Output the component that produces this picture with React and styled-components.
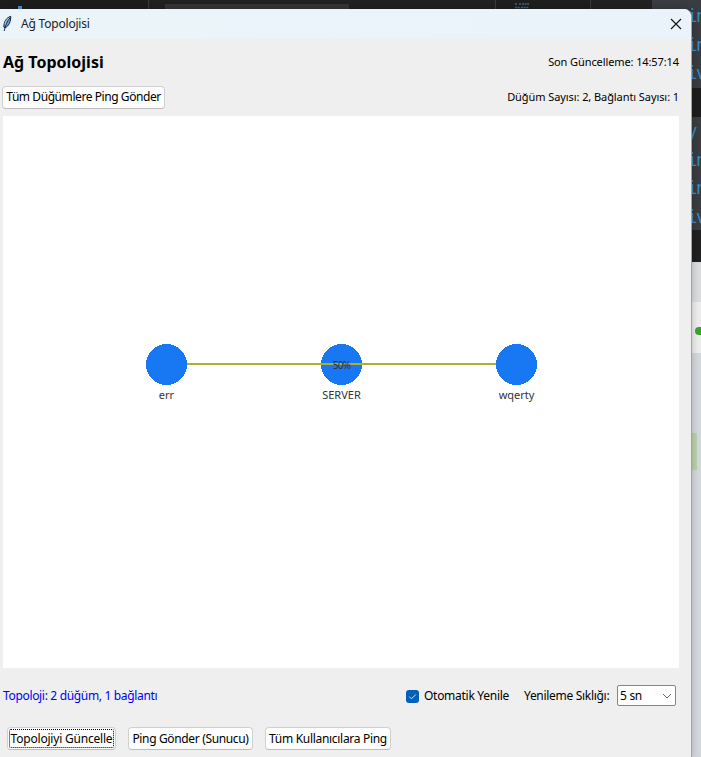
import React from "react";
import styled, { createGlobalStyle } from "styled-components";

const GlobalStyle = createGlobalStyle`
  * { box-sizing: border-box; }
  body { margin: 0; overflow: hidden; }
  button { margin: 0; font: inherit; letter-spacing: inherit; }
`;

const Desktop = styled.div`
  display: grid;
  width: 701px;
  height: 757px;
  overflow: hidden;
  font: 12px/16px "Noto Sans", "Open Sans", sans-serif;
  color: #000;
`;

const Backdrop = styled.div`
  grid-area: 1 / 1;
  display: flex;
  justify-content: space-between;
  background: #1d1d1d;
  overflow: hidden;
`;

const EditorStrip = styled.div`
  display: flex;
  width: 652px;
  height: 24px;
`;

const StripPart = styled.div`
  width: ${(p) => p.$w}px;
  background: ${(p) => p.$bg};
  border-left: ${(p) => (p.$line ? "1px solid #3c3c3c" : "0")};
`;

const SearchBox = styled.div`
  width: 184px;
  height: 12px;
  margin: 4px 0 0 16px;
  background: #353535;
`;

const CodeGlyph = styled.div`
  width: 4px;
  height: 3px;
  margin: 6px 0 0 18px;
  background: #4a8fd0;
`;

const MiniMap = styled.svg`
  display: block;
  margin: 2px 0 0 18px;
`;

const SideColumn = styled.div`
  width: 49px;
  display: flex;
  flex-direction: column;
`;

const Band = styled.div`
  flex: none;
  height: ${(p) => p.$h}px;
  padding: ${(p) => p.$pt || 0}px 0 0 ${(p) => p.$pl || 0}px;
  background: ${(p) => p.$bg};
  overflow: hidden;
`;

const CodeLine = styled.div`
  height: 28.6px;
  font: 17px/28px "DejaVu Sans Mono", monospace;
  letter-spacing: -1.2px;
  color: #4389c8;
  white-space: pre;
`;

const StatusDot = styled.div`
  width: 9px;
  height: 8px;
  border-radius: 4px;
  background: #35a528;
`;

const Highlight = styled.div`
  width: 45px;
  height: 37px;
  background: #b9d2a8;
`;

const Window = styled.div`
  grid-area: 1 / 1;
  z-index: 1;
  width: 692px;
  height: 748px;
  margin-top: 9px;
  border-right: 1px solid #a2a4a7;
  border-radius: 0 8px 0 0;
  background: #efefef;
  overflow: hidden;
  box-shadow: 0 0 7px rgba(0, 0, 0, 0.22);
`;

const TitleBar = styled.div`
  display: flex;
  align-items: center;
  height: 30px;
  padding: 0 9px 0 1px;
  background: linear-gradient(90deg, #ebf4f8, #eaf3fb);
`;

const Text = styled.span`
  white-space: nowrap;
  font-size: ${(p) => p.$size || 12}px;
  letter-spacing: ${(p) => p.$ls || 0}px;
  color: ${(p) => p.$color || "#000"};
`;

const Heading = styled.h1`
  margin: 0;
  font-size: 16px;
  line-height: 22px;
  font-weight: 700;
  white-space: nowrap;
`;

const TitleText = styled(Text)`
  flex: 1;
  margin-left: 8px;
`;

const Row = styled.div`
  display: flex;
  align-items: center;
  justify-content: space-between;
  height: ${(p) => p.$h}px;
  padding: 0 12px 0 ${(p) => p.$pl}px;
`;

const Canvas = styled.div`
  width: 676px;
  height: 552px;
  margin: 7px 0 0 3px;
  background: #fff;
`;

const Button = styled.button`
  display: flex;
  align-items: center;
  justify-content: center;
  width: ${(p) => p.$w}px;
  height: 23px;
  padding: 0;
  border: 1px solid #d0d0d0;
  border-bottom-color: #bcbcbc;
  border-radius: 4px;
  background: #fdfdfd;
  outline: ${(p) => (p.$focused ? "1px dotted #000" : "none")};
  outline-offset: -3px;
`;

const ButtonRow = styled.div`
  display: flex;
  gap: 12px;
  padding: 19px 0 0 7px;
`;

const StatusRow = styled.div`
  display: flex;
  align-items: center;
  height: 24px;
  margin-top: 16px;
  padding: 0 15px 0 3px;
`;

const Check = styled.span`
  display: flex;
  width: 13px;
  height: 13px;
  margin: 0 5px 0 auto;
  border-radius: 3px;
  background: #005fb8;
`;

const Frequency = styled(Text)`
  width: 86px;
  margin-left: 15px;
`;

const AutoLabel = styled(Text)`
  width: 85px;
`;

const Select = styled.div`
  display: flex;
  align-items: center;
  justify-content: space-between;
  width: 59px;
  height: 21px;
  margin: -1px 0 0 7px;
  padding: 0 3px 0 2px;
  border: 1px solid #858585;
  border-radius: 2px;
  background: #fff;
`;

const NodeLabel = styled.text`
  font: ${(p) => p.$size || 11}px "Noto Sans", "Open Sans", sans-serif;
  letter-spacing: ${(p) => p.$ls || 0}px;
  fill: #333;
  text-anchor: middle;
`;

const nodes = [
  { x: 163.5, name: "err" },
  { x: 338.5, name: "SERVER" },
  { x: 513.5, name: "wqerty" },
];

function Feather() {
  return (
    <svg width="12" height="18" viewBox="0 0 12 18">
      <path d="M9.7 1.3C5.4 2.9 2.8 6.2 2.9 12.1L4 12.8C7.9 11.2 9.9 6.3 9.7 1.3Z" fill="#6ba3e0" stroke="#141b25" strokeWidth="1" />
      <path d="M8.9 3C6 6.5 4.6 10 3.2 16" fill="none" stroke="#173457" strokeWidth="1" />
      <path d="M8 3C5.5 4.5 4.2 6.5 3.9 9.5" fill="none" stroke="#c4def1" strokeWidth=".8" />
    </svg>
  );
}

export default function App() {
  return (
    <>
      <GlobalStyle />
      <Desktop>
        <Backdrop>
          <EditorStrip>
            <StripPart $w={148} $bg="#1d1d1d"><CodeGlyph /></StripPart>
            <StripPart $w={347} $bg="#212121" $line><SearchBox /></StripPart>
            <StripPart $w={95} $bg="#1e1e1e" $line>
              <MiniMap width="24" height="8">
                <path d="M1 2h2m2 0h2m1 0h7M1 5.5h5m1 0h8" stroke="#3f6583" strokeWidth="1.5" strokeDasharray="2 .6" />
              </MiniMap>
            </StripPart>
            <StripPart $w={62} $bg="#222" $line />
          </EditorStrip>
          <SideColumn>
            <Band $h={88} $bg="#393c40" $pl={35} $pt={2}>
              <CodeLine>in</CodeLine>
              <CodeLine>in</CodeLine>
              <CodeLine>iv</CodeLine>
            </Band>
            <Band $h={29} $bg="#1d1d1d" />
            <Band $h={113} $bg="#393c40" $pl={35}>
              <CodeLine>y</CodeLine>
              <CodeLine>in</CodeLine>
              <CodeLine>in</CodeLine>
              <CodeLine>iv</CodeLine>
            </Band>
            <Band $h={32} $bg="#202020" />
            <Band $h={40} $bg="#dadbdd" />
            <Band $h={51} $bg="#ececec" $pl={43} $pt={25}><StatusDot /></Band>
            <Band $h={404} $bg="#d3d6db" $pt={80}><Highlight /></Band>
          </SideColumn>
        </Backdrop>

        <Window>
          <TitleBar>
            <Feather />
            <TitleText $ls={-0.2} $color="#222">Ağ Topolojisi</TitleText>
            <svg width="12" height="12" viewBox="0 0 12 12">
              <path d="M1 1L11 11M11 1L1 11" stroke="#111" strokeWidth="1.1" />
            </svg>
          </TitleBar>
          <Row $h={46} $pl={3}>
            <Heading>Ağ Topolojisi</Heading>
            <Text $size={11} $ls={-0.1}>Son Güncelleme: 14:57:14</Text>
          </Row>
          <Row $h={24} $pl={2}>
            <Button $w={163}><Text $ls={-0.43}>Tüm Düğümlere Ping Gönder</Text></Button>
            <Text $size={11} $ls={-0.08}>Düğüm Sayısı: 2, Bağlantı Sayısı: 1</Text>
          </Row>
          <Canvas>
            <svg width="676" height="552" display="block">
              {nodes.map((n) => (
                <g key={n.name}>
                  <circle cx={n.x} cy="248.5" r="20.5" fill="#1877f2" shapeRendering="crispEdges" />
                  <NodeLabel x={n.x} y="283">{n.name}</NodeLabel>
                </g>
              ))}
              <path d="M184 248H493" stroke="#b2ae32" strokeWidth="2" />
              <NodeLabel x="338.5" y="253" $size={10} $ls={-0.7}>50%</NodeLabel>
            </svg>
          </Canvas>
          <StatusRow>
            <Text $ls={-0.33} $color="#0000f5">Topoloji: 2 düğüm, 1 bağlantı</Text>
            <Check>
              <svg width="13" height="13" viewBox="0 0 13 13">
                <path d="M3.3 6.6L5.5 8.8L9.8 4.5" fill="none" stroke="#d8e8f6" strokeWidth="1" />
              </svg>
            </Check>
            <AutoLabel $ls={-0.28}>Otomatik Yenile</AutoLabel>
            <Frequency $ls={-0.3}>Yenileme Sıklığı:</Frequency>
            <Select>
              <Text $ls={-0.3}>5 sn</Text>
              <svg width="10" height="6" viewBox="0 0 10 6">
                <path d="M1 1L5 5L9 1" fill="none" stroke="#666" strokeWidth="1" />
              </svg>
            </Select>
          </StatusRow>
          <ButtonRow>
            <Button $w={109} $focused><Text $ls={-0.2}>Topolojiyi Güncelle</Text></Button>
            <Button $w={125}><Text $ls={-0.35}>Ping Gönder (Sunucu)</Text></Button>
            <Button $w={126}><Text $ls={-0.3}>Tüm Kullanıcılara Ping</Text></Button>
          </ButtonRow>
        </Window>
      </Desktop>
    </>
  );
}
